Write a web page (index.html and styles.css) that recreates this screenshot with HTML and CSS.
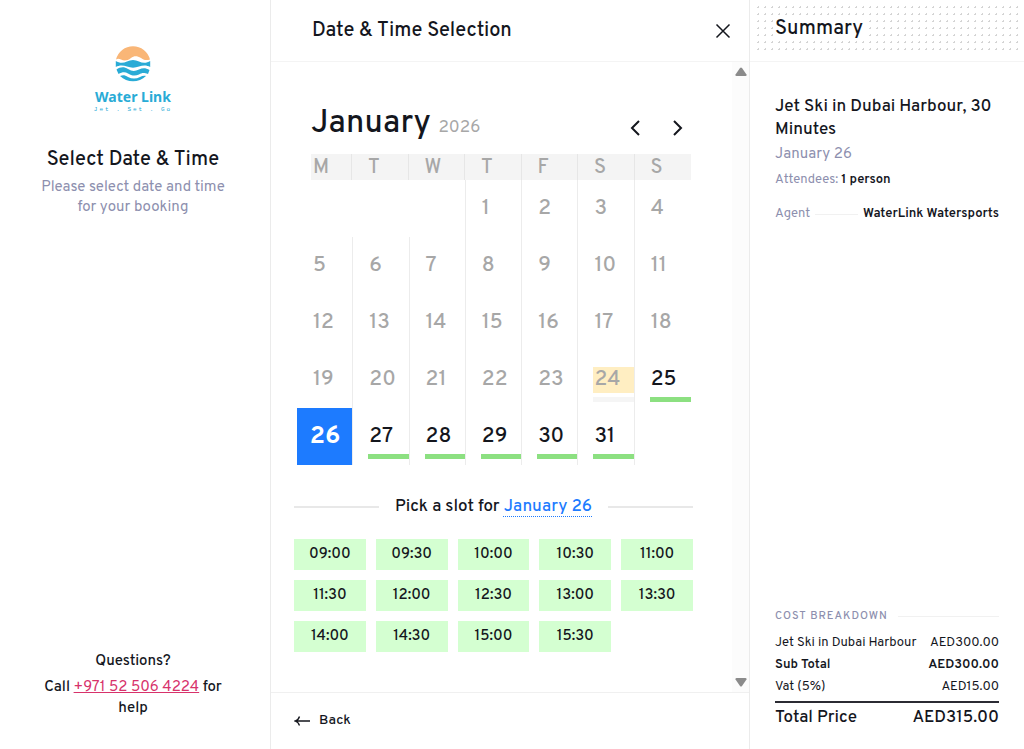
FILE: index.html
```
<!DOCTYPE html>
<html lang="en">
<head>
    <meta charset="UTF-8">
    <meta name="viewport" content="width=device-width, initial-scale=1.0">
    <title>Water Link - Booking</title>
    <link rel="stylesheet" href="styles.css">
</head>
<body>
    <div class="booking">
        <aside class="side-panel">
            <div class="logo">
                <svg width="36" height="36" viewBox="0 0 36 36" aria-hidden="true">
                    <path fill="#f9b677" d="M1 13.500A17.500 17.500 0 0 1 35 13.500C31 15 28 13.500 26 12C22 9.500 19 9.500 16 12C12 15 9 15 6 13.500C4 12.500 2.500 12.500 1 13.500Z"/>
                    <path fill="#29abd6" d="M.8 15C4 17 8 17.500 12 15.500C16 13.500 20 13.500 24 15.500C28 17.500 32 17 35.200 15V21C32 19 28 19 24 20.500C20 22 16 22 12 20.500C8 19 4 19 .8 21Z"/>
                    <path fill="#29abd6" d="M1.500 23.500C5 21 9 20.500 13 23C17 25.500 20 25.500 24 23.500C28 21.500 31 22 34.500 24L33 28C29 26.500 27 26.500 24 28.500C20 30.500 16 29.500 13 27.500C10 25.500 7 26 3.500 28Z"/>
                    <path fill="#29abd6" d="M5 30C8 28.500 10 29 13 31C17 33 21 33 25 31C27 30 29 29.500 31 30C24 37 12 37 5 30Z"/>
                </svg>
                <div class="logo-name">Water Link</div>
                <div class="logo-tagline">Jet . Set . Go</div>
            </div>
            <h2 class="side-title">Select Date &amp; Time</h2>
            <p class="side-text">Please select date and time for your booking</p>
            <div class="side-help">
                <div class="help-title">Questions?</div>
                <div>Call <a class="phone" href="tel:+971525064224">+971 52 506 4224</a> for help</div>
            </div>
        </aside>

        <main class="main-panel">
            <header class="main-header">
                <h1 class="panel-title">Date &amp; Time Selection</h1>
                <button class="icon-btn" type="button" aria-label="Close">
                    <svg class="close-icon" width="16" height="16" viewBox="0 0 16 16"><path d="M1.500 1.500L14.500 14.500M14.500 1.500L1.500 14.500"/></svg>
                </button>
            </header>

            <div class="main-body">
                <div class="main-content">
                    <div class="month-bar">
                        <div class="month-name">January <span class="month-year">2026</span></div>
                        <div class="month-nav">
                            <button class="icon-btn" type="button" aria-label="Previous month">
                                <svg width="12" height="18" viewBox="0 0 12 18"><path d="M10 2L3 9L10 16"/></svg>
                            </button>
                            <button class="icon-btn" type="button" aria-label="Next month">
                                <svg width="12" height="18" viewBox="0 0 12 18"><path d="M2 2L9 9L2 16"/></svg>
                            </button>
                        </div>
                    </div>

                    <div class="weekdays">
                        <div>M</div><div>T</div><div>W</div><div>T</div><div>F</div><div>S</div><div>S</div>
                    </div>
                    <div class="days">
                        <div class="blank"></div>
                        <div class="blank"></div>
                        <div class="blank last-blank"></div>
                        <button class="day" type="button" disabled><span>1</span></button>
                        <button class="day" type="button" disabled><span>2</span></button>
                        <button class="day" type="button" disabled><span>3</span></button>
                        <button class="day" type="button" disabled><span>4</span></button>
                        <button class="day" type="button" disabled><span>5</span></button>
                        <button class="day" type="button" disabled><span>6</span></button>
                        <button class="day" type="button" disabled><span>7</span></button>
                        <button class="day" type="button" disabled><span>8</span></button>
                        <button class="day" type="button" disabled><span>9</span></button>
                        <button class="day" type="button" disabled><span>10</span></button>
                        <button class="day" type="button" disabled><span>11</span></button>
                        <button class="day" type="button" disabled><span>12</span></button>
                        <button class="day" type="button" disabled><span>13</span></button>
                        <button class="day" type="button" disabled><span>14</span></button>
                        <button class="day" type="button" disabled><span>15</span></button>
                        <button class="day" type="button" disabled><span>16</span></button>
                        <button class="day" type="button" disabled><span>17</span></button>
                        <button class="day" type="button" disabled><span>18</span></button>
                        <button class="day" type="button" disabled><span>19</span></button>
                        <button class="day" type="button" disabled><span>20</span></button>
                        <button class="day" type="button" disabled><span>21</span></button>
                        <button class="day" type="button" disabled><span>22</span></button>
                        <button class="day" type="button" disabled><span>23</span></button>
                        <button class="day today" type="button" disabled><span>24</span></button>
                        <button class="day open" type="button"><span>25</span></button>
                        <button class="day selected" type="button"><span>26</span></button>
                        <button class="day open" type="button"><span>27</span></button>
                        <button class="day open" type="button"><span>28</span></button>
                        <button class="day open" type="button"><span>29</span></button>
                        <button class="day open" type="button"><span>30</span></button>
                        <button class="day open" type="button"><span>31</span></button>
                    </div>

                    <div class="slot-heading">
                        <div>Pick a slot for <span class="slot-date">January 26</span></div>
                    </div>
                    <div class="slots">
                        <button class="slot" type="button">09:00</button>
                        <button class="slot" type="button">09:30</button>
                        <button class="slot" type="button">10:00</button>
                        <button class="slot" type="button">10:30</button>
                        <button class="slot" type="button">11:00</button>
                        <button class="slot" type="button">11:30</button>
                        <button class="slot" type="button">12:00</button>
                        <button class="slot" type="button">12:30</button>
                        <button class="slot" type="button">13:00</button>
                        <button class="slot" type="button">13:30</button>
                        <button class="slot" type="button">14:00</button>
                        <button class="slot" type="button">14:30</button>
                        <button class="slot" type="button">15:00</button>
                        <button class="slot" type="button">15:30</button>
                    </div>
                </div>
                <div class="scroll-track" aria-hidden="true">
                    <svg width="12" height="10" viewBox="0 0 12 10"><path d="M5 1Q6 0 7 1L11.500 7.500Q12 9 10.500 9H1.500Q0 9 .5 7.500Z"/></svg>
                    <svg width="12" height="10" viewBox="0 0 12 10"><path d="M5 9Q6 10 7 9L11.500 2.500Q12 1 10.500 1H1.500Q0 1 .5 2.500Z"/></svg>
                </div>
            </div>

            <footer class="main-footer">
                <button class="back-btn" type="button">
                    <svg width="16" height="12" viewBox="0 0 16 12" aria-hidden="true"><path d="M5.500 1.500Q4.500 5 1 6Q4.500 7 5.500 10.500M1 6H16"/></svg>
                    Back
                </button>
            </footer>
        </main>

        <aside class="summary">
            <header class="summary-header">
                <h2 class="panel-title">Summary</h2>
            </header>
            <div class="summary-body">
                <h3 class="service">Jet Ski in Dubai Harbour, 30 Minutes</h3>
                <div class="service-date">January 26</div>
                <div class="attendees">Attendees: <strong>1 person</strong></div>
                <div class="agent"><span>Agent</span><i class="line"></i><strong>WaterLink Watersports</strong></div>
            </div>
            <div class="costs">
                <div class="costs-title">Cost Breakdown<i class="line"></i></div>
                <div class="cost-row"><span>Jet Ski in Dubai Harbour</span><span>AED300.00</span></div>
                <div class="cost-row bold"><span>Sub Total</span><span>AED300.00</span></div>
                <div class="cost-row"><span>Vat (5%)</span><span>AED15.00</span></div>
                <div class="cost-row total"><span>Total Price</span><span>AED315.00</span></div>
            </div>
        </aside>
    </div>
</body>
</html>
```
FILE: styles.css
```
* {
    box-sizing: border-box;
}
body {
    margin: 0;
    font-family: Overpass, Roboto, "Liberation Sans", sans-serif;
    font-size: 15px;
    font-weight: 500;
    line-height: 20px;
    color: #14161d;
    background-color: #ffffff;
}
h1, h2, h3, p {
    margin: 0;
    font-weight: 500;
}
button {
    padding: 0;
    border: none;
    background: none;
    font: inherit;
    color: inherit;
    cursor: pointer;
}
svg {
    display: block;
}
strong {
    font-weight: 600;
    color: #14161d;
}
.booking {
    display: grid;
    grid-template-columns: 271px 1fr 275px;
    min-height: 100vh;
}
.panel-title {
    font-size: 20px;
    line-height: 24px;
}

/* left panel */
.side-panel {
    display: flex;
    flex-direction: column;
    align-items: center;
    padding: 46px 38px 30px 34px;
    border-right: 1px solid #ebebeb;
    text-align: center;
}
.logo {
    display: flex;
    flex-direction: column;
    align-items: center;
    margin-bottom: 34px;
    color: #29abd6;
}
.logo-name {
    margin-top: 6px;
    font-family: "Noto Sans", sans-serif;
    font-size: 14px;
    font-weight: 700;
    line-height: 18px;
}
.logo-tagline {
    font-family: "Liberation Mono", monospace;
    font-size: 6px;
    line-height: 8px;
    letter-spacing: 2px;
}
.side-title {
    font-size: 20px;
    line-height: 24px;
    margin-bottom: 6px;
}
.side-text {
    font-weight: 400;
    color: #8d8fae;
}
.side-help {
    margin-top: auto;
    line-height: 21px;
}
.help-title {
    margin-bottom: 5px;
}
.phone {
    color: #d7326b;
    font-weight: 400;
}

/* calendar panel */
.main-panel {
    display: flex;
    flex-direction: column;
}
.main-header {
    display: flex;
    justify-content: space-between;
    align-items: center;
    height: 62px;
    padding: 0 16px 0 41px;
    border-bottom: 1px solid #f4f4f4;
}
.icon-btn {
    display: flex;
    padding: 2px;
}
.icon-btn svg, .back-btn svg {
    fill: none;
    stroke: #14161d;
    stroke-width: 2px;
}
.icon-btn .close-icon {
    stroke-width: 1.500px;
}
.main-body {
    flex: 1;
    display: flex;
}
.main-content {
    flex: 1;
    padding: 44px 39px 0 23px;
}
.scroll-track {
    display: flex;
    flex-direction: column;
    justify-content: space-between;
    align-items: center;
    width: 17px;
    padding: 5px 0;
    background-color: #fcfcfc;
}
.scroll-track svg {
    fill: #8b8b8b;
}
.month-bar {
    display: flex;
    justify-content: space-between;
    align-items: center;
    height: 40px;
    margin: 0 7px 8px 17px;
}
.month-name {
    font-size: 32px;
    line-height: 40px;
}
.month-year {
    font-size: 17px;
    font-weight: 400;
    color: #a7a7a7;
}
.month-nav {
    display: flex;
    gap: 27px;
    padding-top: 4px;
}
.weekdays {
    display: grid;
    grid-template-columns: 41px repeat(6, 1fr);
    margin: 0 2px 0 17px;
    background-color: #f4f4f4;
    font-size: 20px;
    line-height: 24px;
    color: #a7a7a7;
}
.weekdays div {
    padding: 2px 0 0 16px;
    border-right: 1px solid #e6e6e6;
}
.weekdays div:first-child {
    padding-left: 2px;
}
.weekdays div:last-child {
    border-right: none;
}
.days {
    display: grid;
    grid-template-columns: repeat(7, 1fr);
    grid-auto-rows: 57px;
    margin: 0 2px 0 3px;
    font-size: 21px;
    line-height: 26px;
}
.day {
    display: flex;
    flex-direction: column;
    justify-content: center;
    padding-left: 15px;
    border-right: 1px solid #ececec;
    text-align: left;
}
.day:nth-child(7n) {
    border-right: none;
}
.last-blank {
    border-right: 1px solid #ececec;
}
.day:disabled {
    color: #a7a7a7;
}
.day span {
    width: 100%;
    padding-left: 1px;
}
.day.open::after, .day.today::after {
    content: "";
    width: 100%;
    height: 5px;
    margin-top: 4px;
    background-color: #8ce081;
}
.day.open, .day.today {
    justify-content: flex-end;
    padding-bottom: 6px;
}
.day.today span {
    background-color: #ffeec2;
}
.day.today::after {
    background-color: #f5f5f5;
}
.day.selected {
    padding-left: 0;
    background-color: #1d7bff;
    color: #ffffff;
    font-size: 25px;
    font-weight: 700;
    text-align: center;
}
.slot-heading {
    display: flex;
    align-items: center;
    gap: 16px;
    margin: 31px 0 21px;
    font-size: 17px;
    line-height: 22px;
}
.slot-heading::before, .slot-heading::after {
    content: "";
    flex: 1;
    height: 2px;
    background-color: #e8e8e8;
}
.slot-date {
    color: #1d7bff;
    text-decoration: underline dotted 1px;
    text-underline-offset: 5px;
}
.slots {
    display: grid;
    grid-template-columns: repeat(5, 1fr);
    gap: 10px;
}
.slot {
    height: 31px;
    background-color: #d4ffd1;
}
.main-footer {
    display: flex;
    align-items: center;
    height: 57px;
    padding-left: 23px;
    border-top: 1px solid #f0f0f0;
}
.back-btn {
    display: flex;
    align-items: center;
    gap: 9px;
    font-size: 14px;
}
.back-btn svg {
    stroke-width: 1.300px;
}

/* summary */
.summary {
    display: flex;
    flex-direction: column;
    border-left: 1px solid #ebebeb;
}
.summary-header {
    height: 62px;
    padding: 4px 4px 6px 5px;
    border-bottom: 1px solid #f4f4f4;
    background-image: radial-gradient(circle, #d4d4d4 1px, transparent 1px);
    background-size: 7px 7px;
    background-clip: content-box;
    background-origin: content-box;
}
.summary-header .panel-title {
    width: fit-content;
    margin: 13px 0 0 18px;
    padding: 0 2px;
    background-color: #ffffff;
}
.summary-body {
    padding: 34px 25px;
}
.service {
    font-size: 17px;
    line-height: 23px;
}
.service-date {
    margin-top: 3px;
    font-weight: 400;
    color: #8d8fae;
}
.attendees, .agent {
    font-size: 13px;
    font-weight: 400;
    color: #8d8fae;
}
.attendees {
    margin-top: 5px;
}
.agent {
    display: flex;
    align-items: center;
    gap: 5px;
    margin-top: 14px;
}
.line {
    flex: 1;
    height: 1px;
    background-color: #f1f1f1;
}
.costs {
    margin-top: auto;
    padding: 0 25px 20px;
}
.costs-title {
    display: flex;
    align-items: center;
    gap: 10px;
    margin-bottom: 6px;
    font-size: 11px;
    letter-spacing: 1px;
    text-transform: uppercase;
    color: #8d8fae;
}
.cost-row {
    display: flex;
    justify-content: space-between;
    font-size: 13px;
    font-weight: 400;
    line-height: 22px;
}
.cost-row.bold {
    font-weight: 600;
}
.cost-row.total {
    margin-top: 3px;
    padding-top: 4px;
    border-top: 2px solid #2b2b33;
    font-size: 17px;
    font-weight: 500;
}
```
